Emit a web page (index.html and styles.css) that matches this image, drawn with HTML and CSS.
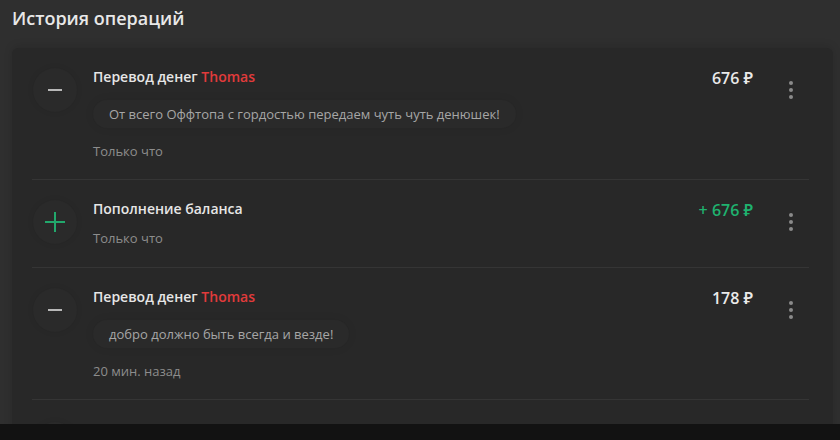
FILE: index.html
```html
<!DOCTYPE html>
<html lang="ru">
<head>
<meta charset="utf-8">
<link rel="stylesheet" href="styles.css">
</head>
<body>
<h1 class="page-title">История операций</h1>
<div class="card">
  <div class="op">
    <div class="op-icon minus"><span></span></div>
    <div class="op-body">
      <div class="op-title">Перевод денег <span class="user">Thomas</span></div>
      <div class="op-msg">От всего Оффтопа с гордостью передаем чуть чуть денюшек!</div>
      <div class="op-time">Только что</div>
    </div>
    <div class="op-amount">676 ₽</div>
    <div class="op-more"><i></i><i></i><i></i></div>
  </div>
  <div class="op">
    <div class="op-icon plus"><span></span></div>
    <div class="op-body">
      <div class="op-title">Пополнение баланса</div>
      <div class="op-time">Только что</div>
    </div>
    <div class="op-amount income">+ 676 ₽</div>
    <div class="op-more"><i></i><i></i><i></i></div>
  </div>
  <div class="op">
    <div class="op-icon minus"><span></span></div>
    <div class="op-body">
      <div class="op-title">Перевод денег <span class="user">Thomas</span></div>
      <div class="op-msg">добро должно быть всегда и везде!</div>
      <div class="op-time">20 мин. назад</div>
    </div>
    <div class="op-amount">178 ₽</div>
    <div class="op-more"><i></i><i></i><i></i></div>
  </div>
  <div class="op">
    <div class="op-icon minus"><span></span></div>
    <div class="op-body">
      <div class="op-title">Перевод денег</div>
    </div>
  </div>
</div>
<div class="bottom-bar"></div>
</body>
</html>
```

FILE: styles.css
```css
html, body {
  margin: 0;
  padding: 0;
  background: #2f2f2f;
  font-family: "Open Sans", "Noto Sans", sans-serif;
  overflow: hidden;
}

body {
  height: 100vh;
}

.page-title {
  margin: 0;
  padding: 6px 12px 0;
  height: 41px;
  box-sizing: border-box;
  font-size: 18px;
  line-height: 25px;
  font-weight: 600;
  color: #e8e8e8;
}

.card {
  margin: 7px 7px 0 12px;
  background: #282828;
  border-radius: 6px;
  box-shadow: 0 -2px 8px rgba(0, 0, 0, 0.12);
  padding: 0 24px 0 20px;
}

.op {
  display: flex;
  align-items: flex-start;
  padding: 20px 0 20px;
  border-bottom: 1px solid #353535;
}

.op:nth-child(2) { padding-bottom: 21px; }
.op:nth-child(4) { padding-top: 22px; }

.op-icon {
  width: 44px;
  height: 44px;
  flex: none;
  border-radius: 50%;
  background: #2a2a2a;
  box-shadow: 0 0 6px rgba(0, 0, 0, 0.08);
  position: relative;
  margin-left: 1px;
}

.op-icon span {
  position: absolute;
  left: 15px;
  top: 21px;
  width: 14px;
  height: 2px;
  background: #b8b8b8;
}

.op-icon.plus span {
  background: #22a86c;
  left: 12px;
  width: 20px;
}

.op-icon.plus span::after {
  content: "";
  position: absolute;
  left: 9px;
  top: -9px;
  width: 2px;
  height: 20px;
  background: #22a86c;
}

.op-body {
  flex: 1;
  margin-left: 16px;
  display: flex;
  flex-direction: column;
  align-items: flex-start;
}

.op-title {
  font-size: 14px;
  line-height: 18px;
  font-weight: 600;
  color: #e6e6e6;
}

.op-title .user {
  color: #e23b3b;
}

.op-msg {
  margin-top: 14px;
  padding: 6px 16px;
  font-size: 13px;
  line-height: 16px;
  color: #a6a6a6;
  background: #2a2a2a;
  border-radius: 14px;
  box-shadow: 0 0 10px rgba(0, 0, 0, 0.08);
}

.op-msg + .op-time {
  margin-top: 15px;
}

.op-time {
  margin-top: 12px;
  font-size: 13px;
  line-height: 16px;
  color: #8d8d8d;
}

.op-amount {
  font-size: 16px;
  line-height: 20px;
  font-weight: 600;
  color: #eaeaea;
  white-space: nowrap;
}

.op-amount.income {
  color: #1fb26f;
}

.op-more {
  width: 36px;
  height: 44px;
  margin-left: 20px;
  flex: none;
  display: flex;
  flex-direction: column;
  align-items: center;
  justify-content: center;
  gap: 3px;
}

.op-more i {
  display: block;
  width: 4px;
  height: 4px;
  border-radius: 50%;
  background: #8a8a8a;
}

.bottom-bar {
  position: fixed;
  left: 0;
  right: 0;
  bottom: 0;
  height: 16px;
  background: #121212;
}
```
